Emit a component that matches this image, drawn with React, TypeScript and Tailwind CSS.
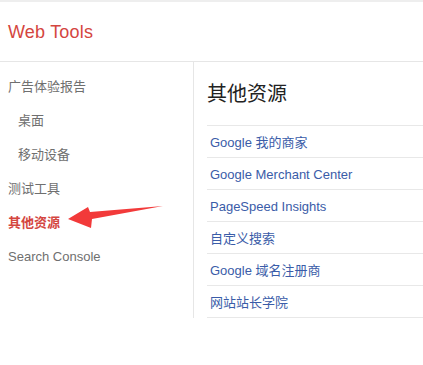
import React from 'react';

const navItems = [
  { label: '广告体验报告', indent: false },
  { label: '桌面', indent: true },
  { label: '移动设备', indent: true },
  { label: '测试工具', indent: false },
  { label: '其他资源', indent: false, active: true },
  { label: 'Search Console', indent: false },
];

const links = [
  'Google 我的商家',
  'Google Merchant Center',
  'PageSpeed Insights',
  '自定义搜索',
  'Google 域名注册商',
  '网站站长学院',
];

export default function App() {
  return (
    <div
      className="relative w-[423px] h-[365px] bg-white overflow-hidden"
      style={{ fontFamily: '"Liberation Sans", Arial, "Noto Sans CJK SC", sans-serif' }}
    >
      <div className="h-[2px] bg-[#eeeeee]" />

      {/* header */}
      <div className="h-[60px] flex items-center pl-2 pt-[2px] border-b border-[#e6e6e6]">
        <span className="text-[18px] text-[#d4463f] tracking-[0.2px]">Web Tools</span>
      </div>

      <div className="flex">
        {/* sidebar */}
        <div className="w-[194px] h-[256px] border-r border-[#e6e6e6] pt-[8px]">
          {navItems.map((item) => (
            <div
              key={item.label}
              className={`h-[34px] flex items-center text-[13px] ${item.indent ? 'pl-[18px]' : 'pl-2'} ${
                item.active ? 'text-[#d4463f] font-bold' : 'text-[#6f6f6f]'
              }`}
            >
              {item.label}
            </div>
          ))}
        </div>

        {/* content */}
        <div className="flex-1 pl-[13px]">
          <div className="h-[63px] flex items-center pt-[1px]">
            <h2 className="text-[20px] text-[#222222] font-normal">其他资源</h2>
          </div>
          <div className="border-b border-[#e8e8e8]">
            {links.map((l) => (
              <div key={l} className="h-[32px] flex items-center pl-[3px] pt-[2px] border-t border-[#e8e8e8] text-[13px] text-[#3a5ca8]">
                {l}
              </div>
            ))}
          </div>
        </div>
      </div>

      {/* annotation arrow */}
      <svg className="absolute left-0 top-0 pointer-events-none" width="423" height="365">
        <polygon
          points="68,219 88,207 90,212 163,206 92,219 91,228"
          fill="#f23a3a"
        />
      </svg>
    </div>
  );
}
